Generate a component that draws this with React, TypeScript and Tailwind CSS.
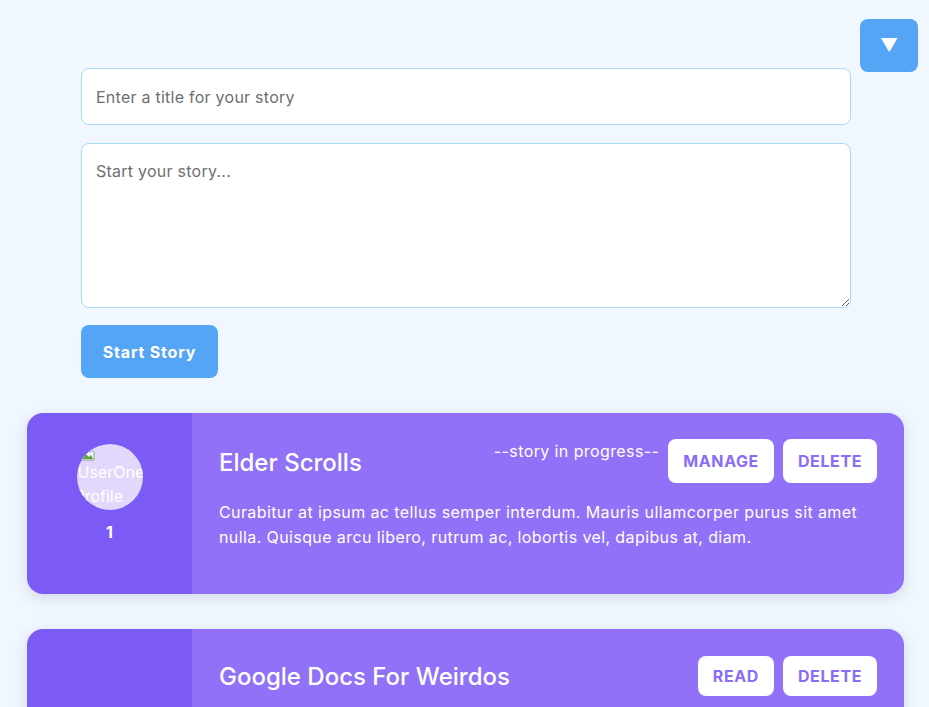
import { useState } from 'react'

type Story = {
  id: number
  title: string
  body?: string
  inProgress: boolean
  owner?: string
  ownerId?: number
}

const stories: Story[] = [
  {
    id: 1,
    title: 'Elder Scrolls',
    body: 'Curabitur at ipsum ac tellus semper interdum. Mauris ullamcorper purus sit amet nulla. Quisque arcu libero, rutrum ac, lobortis vel, dapibus at, diam.',
    inProgress: true,
    owner: 'UserOne',
    ownerId: 1,
  },
  {
    id: 2,
    title: 'Google Docs For Weirdos',
    inProgress: false,
  },
]

function BrokenImage() {
  return (
    <svg width="16" height="16" viewBox="0 0 16 16" className="block ml-[3px] mt-[2px]">
      <path d="M1 2h9l4 4v8H1z" fill="#f3f3f3" stroke="#9a9a9a" strokeWidth="1" />
      <path d="M2 13l4-5 3 3 2-2 2 4z" fill="#5aa53a" />
      <circle cx="10" cy="5" r="1.5" fill="#7cb3e6" />
    </svg>
  )
}

function StoryCard({ story }: { story: Story }) {
  const btn = story.inProgress
    ? 'bg-white rounded-lg px-[15px] h-[44px] text-[#8b6cf6] font-bold uppercase text-base tracking-[0.6px]'
    : 'bg-white rounded-lg px-[15px] h-[40px] mt-[1px] text-[#8b6cf6] font-bold uppercase text-base tracking-[0.6px]'

  return (
    <div className="flex rounded-2xl overflow-hidden shadow-[0_4px_14px_rgba(80,90,140,0.18)] mb-[35px]">
      <div className="w-[165px] shrink-0 bg-[#7b5af5] flex flex-col items-center pt-[31px]">
        {story.owner && (
          <>
            <div className="w-[66px] h-[66px] rounded-full overflow-hidden bg-[#e1d8fc] text-white text-base leading-6">
              <BrokenImage />
              <div className="whitespace-nowrap -mt-[2px] ml-[1px]">{story.owner}</div>
              <div className="whitespace-nowrap -ml-[2px]">Profile</div>
            </div>
            <div className="mt-[10px] text-white font-bold text-base leading-6">{story.ownerId}</div>
          </>
        )}
      </div>
      <div className="flex-1 bg-[#9071f7] pl-[27px] pr-[27px] pt-[26px] pb-[44px]">
        <div className="flex items-center justify-between">
          <h2 className="text-white text-[24px] font-medium leading-8 mt-[3px]">{story.title}</h2>
          <div className="flex items-start gap-[9px]">
            {story.inProgress && (
              <span className="text-white text-base leading-6 tracking-[0.4px]">--story in progress--</span>
            )}
            <button className={btn}>{story.inProgress ? 'Manage' : 'Read'}</button>
            <button className={btn}>Delete</button>
          </div>
        </div>
        {story.body && (
          <p className="mt-[17px] text-white text-base leading-[25px] tracking-[0.4px]">{story.body}</p>
        )}
      </div>
    </div>
  )
}

export default function App() {
  const [open, setOpen] = useState(true)
  const [titulo, setTitulo] = useState('')
  const [texto, setTexto] = useState('')

  return (
    <div
      className="relative min-h-[707px] bg-[#f0f7fe] pt-[68px]"
      style={{ fontFamily: 'Inter, "Noto Sans", sans-serif' }}
    >
      <button
        onClick={() => setOpen(!open)}
        className="absolute top-[19px] right-[11px] w-[58px] h-[53px] rounded-lg bg-[#54a5f5] text-white text-[18px] leading-none"
      >
        ▼
      </button>

      {open && (
        <form className="ml-[81px] w-[770px] flex flex-col" onSubmit={e => e.preventDefault()}>
          <input
            value={titulo}
            onChange={e => setTitulo(e.target.value)}
            placeholder="Enter a title for your story"
            className="h-[57px] bg-white border border-[#a9d9f7] rounded-lg px-[14px] text-base tracking-[0.25px] text-gray-800 placeholder:text-[#6e6e6e] outline-none"
          />
          <textarea
            value={texto}
            onChange={e => setTexto(e.target.value)}
            placeholder="Start your story..."
            className="mt-[18px] h-[165px] bg-white border border-[#a9d9f7] rounded-lg px-[14px] pt-[15px] text-base leading-6 tracking-[0.25px] text-gray-800 placeholder:text-[#6e6e6e] outline-none"
          />
          <div>
            <button
              type="submit"
              className="mt-[17px] w-[137px] h-[53px] rounded-lg bg-[#54a5f5] text-white font-bold text-base tracking-[0.8px]"
            >
              Start Story
            </button>
          </div>
        </form>
      )}

      <div className="ml-[27px] w-[877px] mt-[35px]">
        {stories.map(s => (
          <StoryCard key={s.id} story={s} />
        ))}
      </div>
    </div>
  )
}
